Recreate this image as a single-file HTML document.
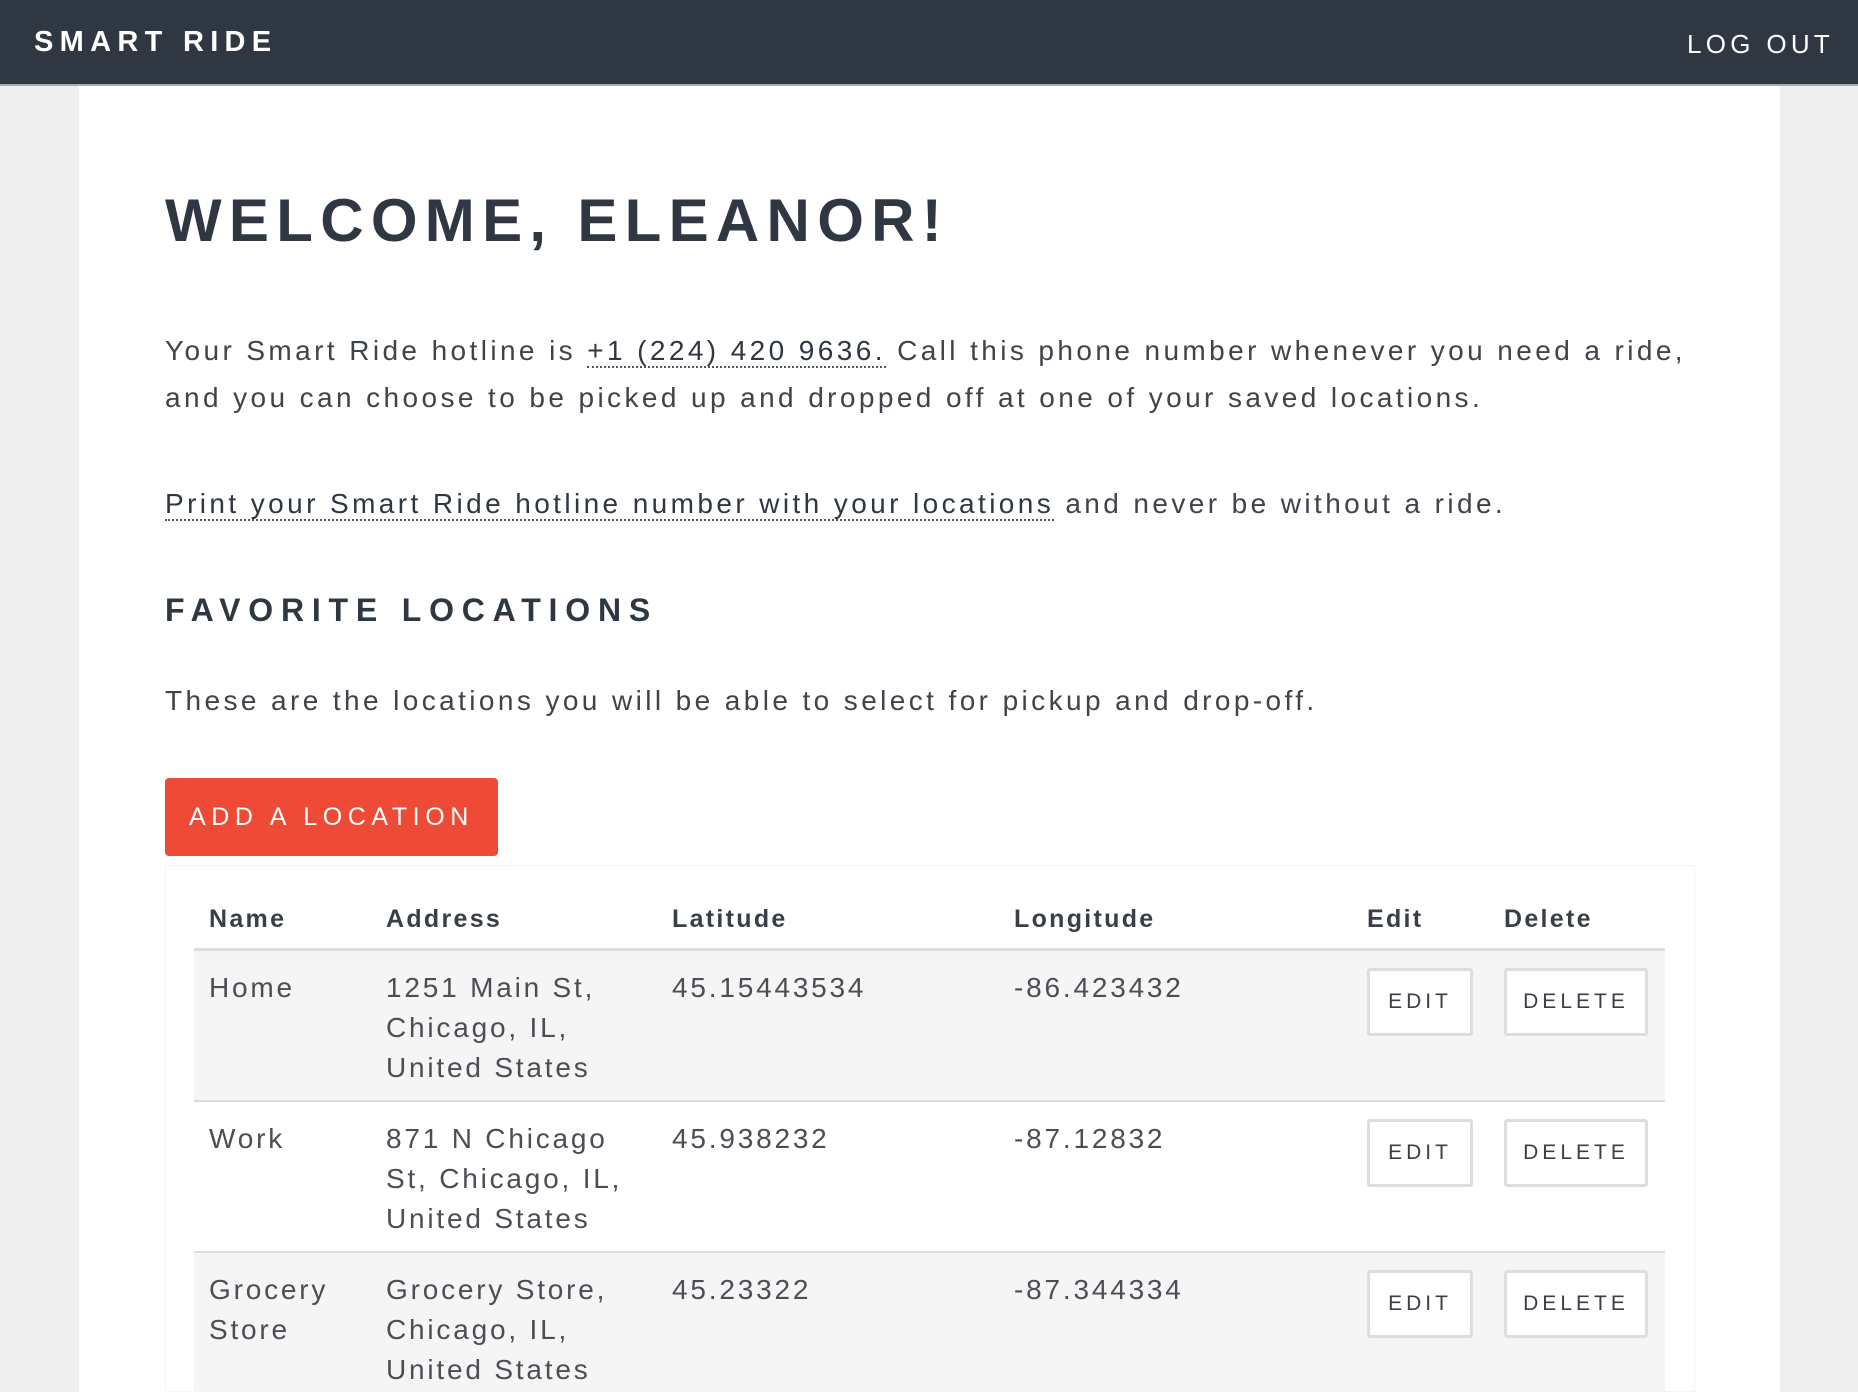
<!DOCTYPE html>
<html style="overflow:hidden;height:1392px"><head><meta charset="utf-8"><style>
*{margin:0;padding:0;box-sizing:border-box}
body{width:1858px;height:1392px;overflow:hidden;position:relative;background:#efefef;font-family:"Liberation Sans",sans-serif;color:#3a3f47}
.hdr{position:absolute;left:0;top:0;width:1858px;height:86px;background:#2e3742;border-bottom:2px solid #a8adb2}
.logo{position:absolute;left:34px;top:26px;font-size:29px;font-weight:bold;color:#fff;letter-spacing:6.3px;line-height:32px}
.out{position:absolute;left:1687px;top:29px;font-size:26px;color:#fff;letter-spacing:4.3px;line-height:30px}
.main{position:absolute;left:79px;top:86px;width:1701px;height:1306px;background:#fff}
.abs{position:absolute;white-space:nowrap}
h1{position:absolute;left:165px;top:188px;font-size:60px;font-weight:bold;color:#2e3742;letter-spacing:7.3px;line-height:66px}
.p{font-size:28px;letter-spacing:3.4px;color:#3f434a}
.u{border-bottom:2px dotted #555;color:#2e3742}
h2{position:absolute;left:165px;top:592px;font-size:32px;font-weight:bold;color:#2e3742;letter-spacing:7.8px;line-height:36px}
.btn{position:absolute;left:165px;top:778px;width:333px;height:78px;background:#ef4a36;border-radius:4px;color:#fff;font-size:25px;letter-spacing:5.6px;line-height:78px;padding-left:24px}
.tbox{position:absolute;left:165px;top:865px;width:1530px;height:527px;border:1px solid #f4f4f4}
.th{position:absolute;top:905px;font-size:25px;font-weight:bold;letter-spacing:2.3px;color:#3a3f47}
.hline{position:absolute;left:194px;top:948px;width:1471px;height:3px;background:#ddd}
.row{position:absolute;left:194px;width:1471px;height:151px;border-bottom:2px solid #ddd}
.td{position:absolute;font-size:28px;letter-spacing:2.8px;line-height:40px;color:#4a4e55;white-space:nowrap}
.b{position:absolute;height:68px;background:#fff;border:3px solid #ddd;border-radius:3px;font-size:21px;letter-spacing:4px;text-align:center;line-height:62px;color:#3a3f47}
</style></head><body>
<div class="hdr"><div class="logo">SMART RIDE</div><div class="out">LOG OUT</div></div>
<div class="main"></div>
<h1>WELCOME, ELEANOR!</h1>
<div class="abs p" style="left:165px;top:327px;line-height:47px">Your Smart Ride hotline is <span class="u">+1 (224) 420 9636.</span> Call this phone number whenever you need a ride,<br>and you can choose to be picked up and dropped off at one of your saved locations.</div>
<div class="abs p" style="left:165px;top:480px;line-height:47px"><span class="u">Print your Smart Ride hotline number with your locations</span> and never be without a ride.</div>
<h2>FAVORITE LOCATIONS</h2>
<div class="abs p" style="left:165px;top:677px;line-height:47px">These are the locations you will be able to select for pickup and drop-off.</div>
<div class="btn">ADD A LOCATION</div>
<div class="tbox"></div>
<div class="th" style="left:209px">Name</div>
<div class="th" style="left:386px">Address</div>
<div class="th" style="left:672px">Latitude</div>
<div class="th" style="left:1014px">Longitude</div>
<div class="th" style="left:1367px">Edit</div>
<div class="th" style="left:1504px">Delete</div>
<div class="hline"></div>

<div class="row" style="top:951px;background:#f5f5f5"></div>
<div class="row" style="top:1102px;background:#fff"></div>
<div class="row" style="top:1253px;background:#f5f5f5;height:139px;border:none"></div>

<div class="td" style="left:209px;top:968px">Home</div>
<div class="td" style="left:386px;top:968px">1251 Main St,<br>Chicago, IL,<br>United States</div>
<div class="td" style="left:672px;top:968px">45.15443534</div>
<div class="td" style="left:1014px;top:968px">-86.423432</div>
<div class="b" style="left:1367px;top:968px;width:106px">EDIT</div>
<div class="b" style="left:1504px;top:968px;width:144px">DELETE</div>

<div class="td" style="left:209px;top:1119px">Work</div>
<div class="td" style="left:386px;top:1119px">871 N Chicago<br>St, Chicago, IL,<br>United States</div>
<div class="td" style="left:672px;top:1119px">45.938232</div>
<div class="td" style="left:1014px;top:1119px">-87.12832</div>
<div class="b" style="left:1367px;top:1119px;width:106px">EDIT</div>
<div class="b" style="left:1504px;top:1119px;width:144px">DELETE</div>

<div class="td" style="left:209px;top:1270px">Grocery<br>Store</div>
<div class="td" style="left:386px;top:1270px">Grocery Store,<br>Chicago, IL,<br>United States</div>
<div class="td" style="left:672px;top:1270px">45.23322</div>
<div class="td" style="left:1014px;top:1270px">-87.344334</div>
<div class="b" style="left:1367px;top:1270px;width:106px">EDIT</div>
<div class="b" style="left:1504px;top:1270px;width:144px">DELETE</div>
</body></html>
